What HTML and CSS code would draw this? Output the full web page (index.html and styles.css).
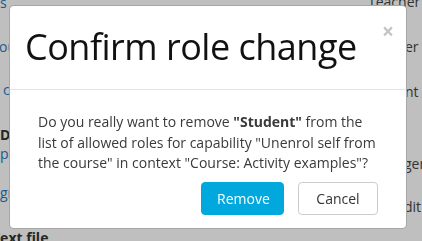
FILE: index.html
```html
<!DOCTYPE html>
<html>
<head>
<meta charset="utf-8">
<link rel="stylesheet" href="styles.css">
</head>
<body>
<div class="page">
  <div class="col-left">
    <div class="ln link l1">s</div>
    <div class="ln link l2">you</div>
    <div class="ln link l3">c</div>
    <div class="ln bold l4">Do</div>
    <div class="ln link l5">p</div>
    <div class="ln link l6">gr</div>
    <div class="ln bold l7">Text file</div>
  </div>
  <div class="col-right">
    <div class="ln r1">Teacher</div>
    <div class="ln r2">er</div>
    <div class="ln r3">nt</div>
    <div class="ln r4">ger</div>
    <div class="ln r5">dit</div>
  </div>
</div>
<div class="overlay"></div>
<div class="modal">
  <div class="modal-header">
    <h2 class="modal-title">Confirm role change</h2>
    <span class="close">×</span>
  </div>
  <div class="modal-body">
    <p>Do you really want to remove <b>"Student"</b> from the list of allowed roles for capability "Unenrol self from the course" in context "Course: Activity examples"?</p>
    <div class="actions">
      <button class="btn btn-primary">Remove</button>
      <button class="btn btn-secondary">Cancel</button>
    </div>
  </div>
</div>
</body>
</html>
```
FILE: styles.css
```css
html, body {
  margin: 0;
  padding: 0;
  width: 422px;
  height: 241px;
  overflow: hidden;
  background: #fff;
  font-family: "Open Sans", sans-serif;
}
.page {
  display: flex;
  justify-content: space-between;
  height: 241px;
}
.col-left {
  width: 60px;
  font-size: 14px;
  line-height: 20px;
}
.col-right {
  width: 54px;
  font-size: 14px;
  line-height: 20px;
  color: #444;
}
.ln { white-space: nowrap; }
.link { color: #1a7cc0; }
.bold { font-weight: 700; color: #333; }
.l1 { margin-top: -7px; }
.l2 { margin-top: 24px; margin-left: -8px; }
.l3 { margin-top: 23px; margin-left: 3px; }
.l4 { margin-top: 25px; }
.l5 { margin-top: -1px; }
.l6 { margin-top: 19px; }
.l7 { margin-top: 25px; margin-left: -8px; }
.r1 { margin-top: -8px; }
.r2 { margin-top: 25px; padding-left: 37px; }
.r3 { margin-top: 25px; padding-left: 37px; }
.r4 { margin-top: 52px; padding-left: 36px; }
.r5 { margin-top: 23px; padding-left: 36px; }
.overlay {
  position: fixed;
  inset: 0;
  background: rgba(0, 0, 0, 0.25);
}
.modal {
  position: absolute;
  left: 9px;
  top: 5px;
  width: 398px;
  height: 224px;
  box-sizing: border-box;
  background: #fff;
  border: 1px solid rgba(0, 0, 0, 0.35);
  border-radius: 5px;
  display: flex;
  flex-direction: column;
}
.modal-header {
  position: relative;
  height: 84px;
  box-sizing: border-box;
  border-bottom: 1px solid #e3e3e3;
  padding: 16px 15px 0 15px;
}
.modal-title {
  margin: 0;
  font-weight: 400;
  font-size: 36px;
  letter-spacing: -0.5px;
  line-height: 50px;
  color: #111;
}
.close {
  position: absolute;
  right: 12px;
  top: 15px;
  font-size: 21px;
  font-weight: 700;
  line-height: 21px;
  color: #c4c4c4;
}
.modal-body {
  padding: 22px 28px 0 28px;
  color: #3a3a3a;
  font-size: 14px;
  line-height: 20.5px;
}
.modal-body p {
  margin: 0;
}
.actions {
  display: flex;
  justify-content: flex-end;
  gap: 14px;
  margin-top: 8px;
}
.btn {
  font-family: "Open Sans", sans-serif;
  font-size: 14px;
  height: 33px;
  border-radius: 4px;
  padding: 0 15px;
  box-sizing: border-box;
}
.btn-primary {
  width: 83px;
  background: #00a8de;
  border: 1px solid #00a8de;
  color: #fff;
}
.btn-secondary {
  width: 80px;
  background: #fff;
  border: 1px solid #ccc;
  color: #333;
}
```
